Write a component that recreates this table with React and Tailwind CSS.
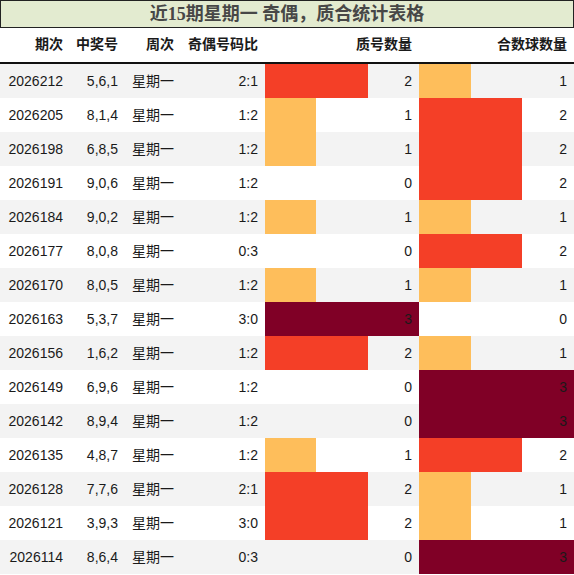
import React from 'react'

const rows = [
  ['2026212', '5,6,1', '2:1', 2, 1],
  ['2026205', '8,1,4', '1:2', 1, 2],
  ['2026198', '6,8,5', '1:2', 1, 2],
  ['2026191', '9,0,6', '1:2', 0, 2],
  ['2026184', '9,0,2', '1:2', 1, 1],
  ['2026177', '8,0,8', '0:3', 0, 2],
  ['2026170', '8,0,5', '1:2', 1, 1],
  ['2026163', '5,3,7', '3:0', 3, 0],
  ['2026156', '1,6,2', '1:2', 2, 1],
  ['2026149', '6,9,6', '1:2', 0, 3],
  ['2026142', '8,9,4', '1:2', 0, 3],
  ['2026135', '4,8,7', '1:2', 1, 2],
  ['2026128', '7,7,6', '2:1', 2, 1],
  ['2026121', '3,9,3', '3:0', 2, 1],
  ['2026114', '8,6,4', '0:3', 0, 3],
]

// bar colour by count
const barColor = { 1: 'bg-[#febe5b]', 2: 'bg-[#f43f27]', 3: 'bg-[#800026]' }

function BarCell({ n, width }) {
  return (
    <div className='relative h-full' style={{ width }}>
      {n > 0 && (
        <div className={'absolute left-0 top-0 h-full ' + barColor[n]} style={{ width: (width / 3) * n }}></div>
      )}
      <div className='relative flex h-full items-center justify-end pr-[7px]'>{n}</div>
    </div>
  )
}

export default function App() {
  return (
    <div className='w-[574px] h-[575px] bg-white text-[14px] text-[#1a1a1a] overflow-hidden' style={{ fontFamily: '"Liberation Sans", "Noto Sans CJK SC", sans-serif' }}>
      {/* title */}
      <div className='h-[28px] border border-[#222] bg-[#e3ebd0] flex items-center justify-center text-[18px] font-bold text-[#474747]' style={{ fontFamily: '"Liberation Serif", "Noto Sans CJK SC", serif' }}>
        近15期星期一 奇偶，质合统计表格
      </div>

      {/* header */}
      <div className='flex h-[36px] items-center border-b-2 border-[#111] font-bold pb-[1px]'>
        <div className='w-[70px] text-right pr-[7px]'>期次</div>
        <div className='w-[55px] text-right pr-[7px]'>中奖号</div>
        <div className='w-[56px] text-right pr-[7px]'>周次</div>
        <div className='w-[84px] text-right pr-[7px]'>奇偶号码比</div>
        <div className='w-[154px] text-right pr-[7px]'>质号数量</div>
        <div className='w-[155px] text-right pr-[7px]'>合数球数量</div>
      </div>

      {rows.map((r, i) => (
        <div key={r[0]} className={'flex h-[34px] items-center ' + (i % 2 === 0 ? 'bg-[#f3f3f3]' : 'bg-white')}>
          <div className='w-[70px] text-right pr-[7px]'>{r[0]}</div>
          <div className='w-[55px] text-right pr-[7px]'>{r[1]}</div>
          <div className='w-[56px] text-right pr-[7px]'>星期一</div>
          <div className='w-[84px] text-right pr-[7px]'>{r[2]}</div>
          <BarCell n={r[3]} width={154} />
          <BarCell n={r[4]} width={155} />
        </div>
      ))}
    </div>
  )
}
